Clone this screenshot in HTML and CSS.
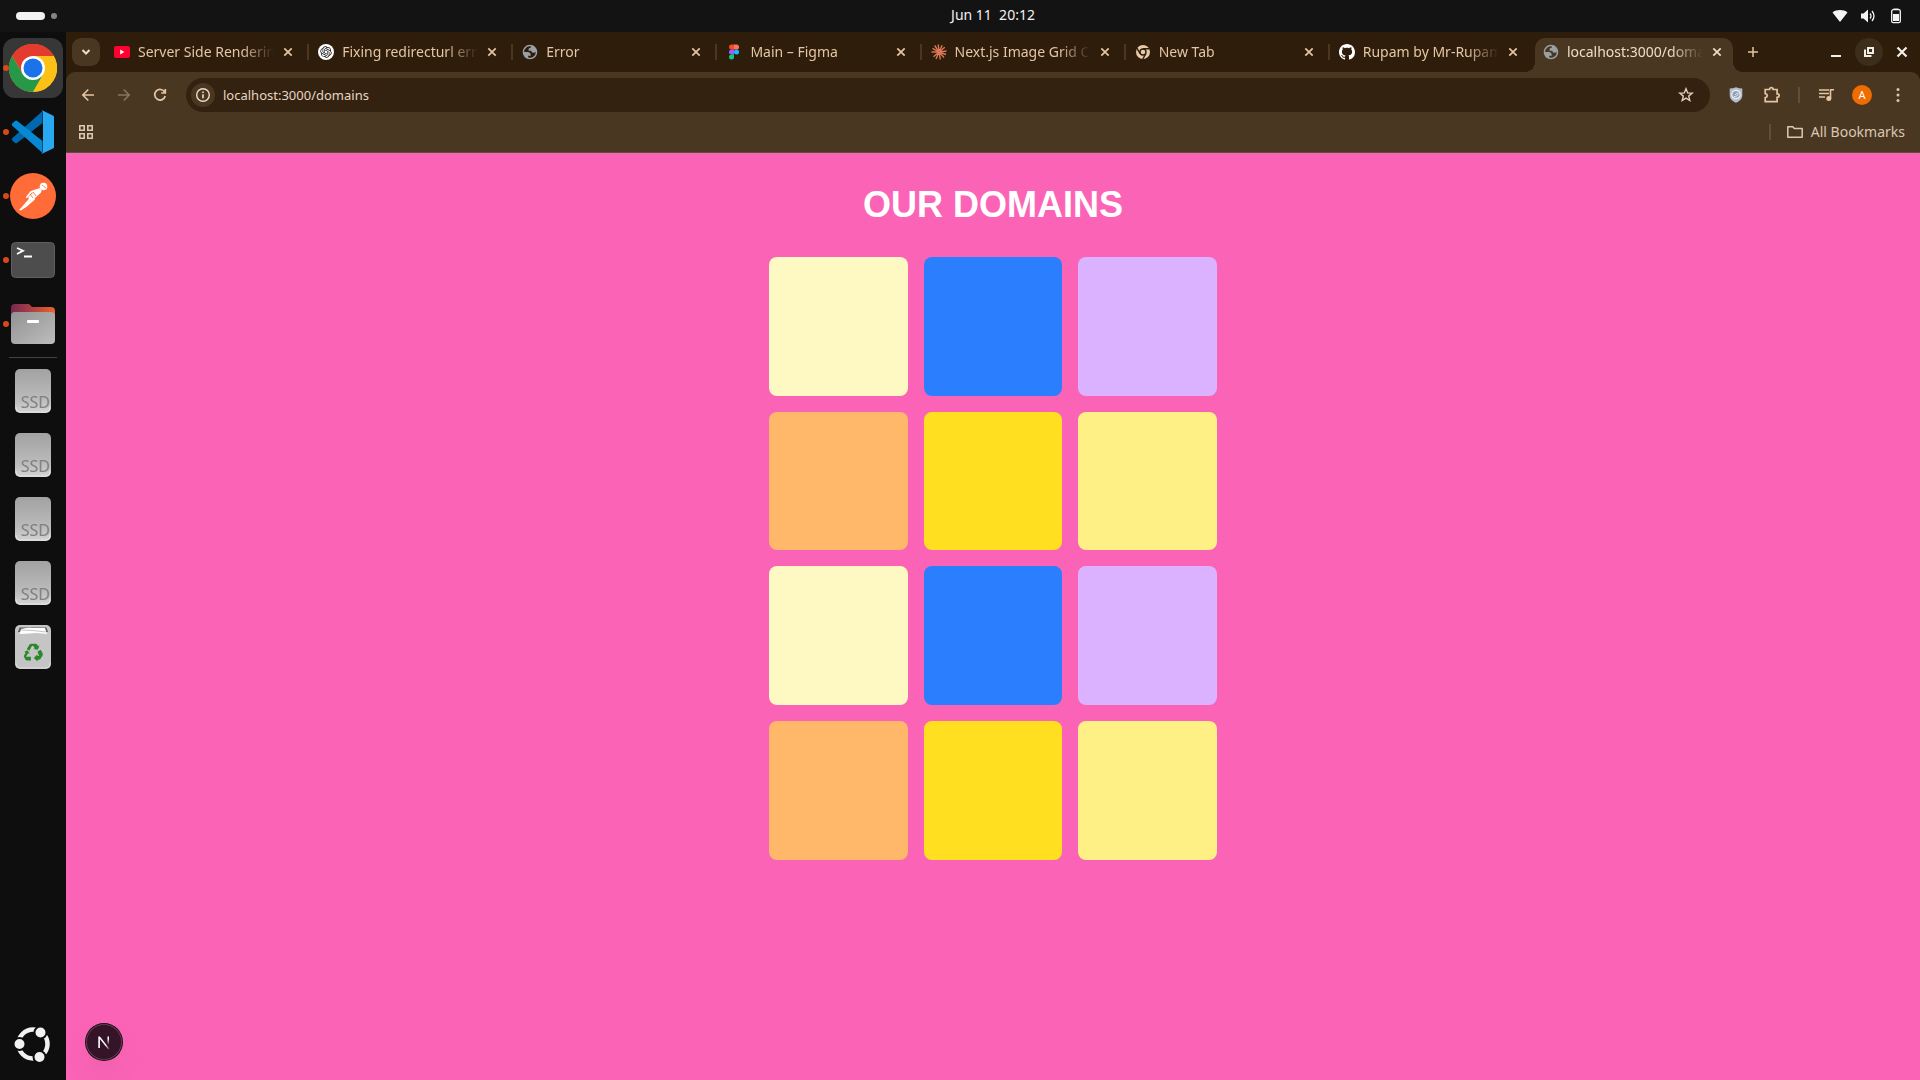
FILE: index.html
```html
<!DOCTYPE html>
<html lang="en">
<head>
<meta charset="utf-8">
<meta name="viewport" content="width=device-width, initial-scale=1">
<title>Our Domains</title>
<link rel="stylesheet" href="styles.css">
</head>
<body>
<svg class="defs" aria-hidden="true">
  <symbol id="close" viewBox="0 0 16 16"><path d="M4.300 4.300l7.400 7.400M11.700 4.300l-7.400 7.400" fill="none" stroke="currentColor" stroke-width="1.700"/></symbol>
  <symbol id="globe" viewBox="1 1 22 22"><path fill="#9aa0a6" fill-rule="evenodd" d="M12 2C6.480 2 2 6.480 2 12s4.480 10 10 10 10-4.480 10-10S17.520 2 12 2zM4 12h4.400c3.407.022 4.922 1.730 4.543 5.127H9.488v2.470a8.004 8.004 0 0 0 10.498-8.083C19.327 12.504 18.332 13 17 13c-2.137 0-3.206-.916-3.206-2.750h-3.748c-.274-2.728.683-4.092 2.870-4.092 0-.975.327-1.597.811-1.970A8.004 8.004 0 0 0 4 12z"/></symbol>
  <linearGradient id="drive-fill" x1="0" y1="0" x2="0" y2="1"><stop offset="0" stop-color="#a2a2a2"/><stop offset=".7" stop-color="#bcbcbc"/><stop offset="1" stop-color="#d4d4d4"/></linearGradient>
  <symbol id="drive" viewBox="0 0 48 48"><rect x="6" y="2" width="36" height="44" rx="5" fill="url(#drive-fill)"/><path d="M7 40v1a4 4 0 0 0 4 4h26a4 4 0 0 0 4-4v-1" fill="none" stroke="#e4e4e4"/></symbol>
</svg>

<header class="topbar">
  <button class="workspaces" aria-label="Activities"><span class="pill"></span><span class="dot"></span></button>
  <time class="clock">Jun 11&nbsp; 20:12</time>
  <div class="status">
    <svg width="16" height="16" viewBox="0 0 16 16"><path d="M.5 4.500C4.500 1.300 11.500 1.300 15.500 4.500L8 14z" fill="#f4f4f4"/></svg>
    <svg width="16" height="16" viewBox="0 0 16 16"><path d="M1 5.500h2.500L8 1.500v13l-4.500-4H1z" fill="#f4f4f4"/><path d="M10 5.500q2 2.500 0 5M12 3q4 5 0 10" fill="none" stroke="#f4f4f4" stroke-width="1.300"/></svg>
    <svg width="16" height="16" viewBox="0 0 16 16"><path d="M5.500 2V.5h5V2" fill="#f4f4f4"/><rect x="3.700" y="1.700" width="8.600" height="13" rx="1.500" fill="none" stroke="#f4f4f4" stroke-width="1.300"/><path d="M5 6h6v7H5z" fill="#f4f4f4"/></svg>
  </div>
</header>

<div class="desktop">
  <nav class="dock" aria-label="Applications">
    <button class="app running focused" aria-label="Chrome">
      <svg viewBox="0 0 48 48"><circle cx="24" cy="24" r="24" fill="#fbc116"/><path d="M24 24 3.200 12A24 24 0 0 1 44.800 12H24z" fill="#e33b2e"/><path d="M24 12h20.800A24 24 0 0 0 3.200 12L13.600 30 24 24z" fill="#e33b2e"/><path d="M3.200 12A24 24 0 0 0 24 48L34.400 30 24 24 13.600 30z" fill="#279847"/><path d="M34.400 30 24 48A24 24 0 0 0 44.800 12H24l6 8z" fill="#fbc116"/><circle cx="24" cy="24" r="12" fill="#fff"/><circle cx="24" cy="24" r="9.500" fill="#1a73e8"/></svg>
    </button>
    <button class="app running" aria-label="Visual Studio Code">
      <svg viewBox="0 0 48 48"><path d="M3 30.500 33.500 3v12L8 35q-1 .7-2 0l-2.700-2.400q-1-1 -.3-2.100z" fill="#0068ae"/><path d="M3.300 15.500 6 13q1-.8 2-.2L33.500 33v12L3 17.500q-.7-1 .3-2z" fill="#0788d2"/><path d="M32.500 2.800q.7-.4 1.500 0L44 7.500q1 .5 1 1.600v29.800q0 1.100-1 1.600L34 45.200q-.8.400-1.500 0 1.500-.2 1.500-2.200V5q0-2-1.500-2.200z" fill="#29a8f2"/></svg>
    </button>
    <button class="app running" aria-label="Postman">
      <svg viewBox="0 0 48 48"><circle cx="24" cy="24" r="23" fill="#ff6c37"/><g stroke="#fff" stroke-linecap="round" fill="none"><circle cx="34.500" cy="14.500" r="3.800" fill="#fff" stroke="none"/><path d="M30 19 22 26" stroke-width="5"/><path d="M22 26 12.500 37M25 27 17 34l-5.500 3.500M28 18l-6 2-4 5" stroke-width="2"/></g><path d="m21 22 3 4m0-6 3 4m6-11 4 3" stroke="#ff6c37" stroke-width=".8"/></svg>
    </button>
    <button class="app running" aria-label="Terminal">
      <svg viewBox="0 0 48 48"><rect x="2.500" y="6.500" width="43" height="35" rx="4" fill="#4d4d4d" stroke="#606060"/><path d="m8 12 6 2.800L8 18M15 20.500h8" fill="none" stroke="#fff" stroke-width="1.800"/></svg>
    </button>
    <button class="app running" aria-label="Files">
      <svg viewBox="0 0 48 48"><linearGradient id="tab-fill"><stop offset="0" stop-color="#77294f"/><stop offset=".4" stop-color="#a63c46"/><stop offset="1" stop-color="#f1622b"/></linearGradient><linearGradient id="box-fill" x1="0" y1="0" x2="1" y2="1"><stop offset="0" stop-color="#929292"/><stop offset="1" stop-color="#bdbdbd"/></linearGradient><path d="M2 20V8q0-4 4-4h14l3 3h19q4 0 4 4v10z" fill="url(#tab-fill)"/><rect x="2" y="12" width="44" height="32" rx="4" fill="url(#box-fill)"/><rect x="18" y="20" width="12" height="3" rx="1" fill="#fff"/></svg>
    </button>
    <hr>
    <button class="app drive" aria-label="Drive 1"><svg><use href="#drive"/></svg><span>SSD</span></button>
    <button class="app drive" aria-label="Drive 2"><svg><use href="#drive"/></svg><span>SSD</span></button>
    <button class="app drive" aria-label="Drive 3"><svg><use href="#drive"/></svg><span>SSD</span></button>
    <button class="app drive" aria-label="Drive 4"><svg><use href="#drive"/></svg><span>SSD</span></button>
    <button class="app" aria-label="Trash">
      <svg viewBox="0 0 48 48"><rect x="6" y="2" width="36" height="44" rx="5" fill="#c5c5c5"/><path d="M7 40v1a4 4 0 0 0 4 4h26a4 4 0 0 0 4-4v-1" fill="none" stroke="#dcdcdc"/><path d="m9 9 1.500-4.500h27L39 9z" fill="#5c5c5c"/><path d="M10.500 11 12 6q8-2 12-1l12 0 2 6-10-1-8 .5z" fill="#fff"/><path d="m12 7 12 .5L37 9" stroke="#aaa" stroke-width=".7" fill="none"/><g fill="#27892b" transform="translate(4.700 5.500) scale(.82)"><path d="m19 27-3-2 3-5q1-1.500 2.500-1.500h5q1.500 0 2.300 1.300l1 1.700 1.700-1-2 5.500-5.500-1 1.700-1-2-3-1.500.2z"/><path d="M17 26.500 19.500 31l-2-.8-2.500 4.300h6V39h-4.500q-1.500 0-2.300-1.300L12.800 35q-.7-1.200 0-2.500l1.700-3-1.500-1z"/><path d="m29 28 4-2 2.200 4.300q.7 1.200 0 2.500L33 36.700q-.7 1.300-2 1.300h-2v2.200L24.500 36l4.500-4.500v2h2z"/></g></svg>
    </button>
    <button class="app show-apps" aria-label="Show apps">
      <svg viewBox="0 0 48 48"><circle cx="24" cy="24" r="14.500" fill="none" stroke="#f2f2f2" stroke-width="4.500"/><g fill="#f2f2f2" stroke="#0e0e0e" stroke-width="2"><circle cx="10.500" cy="24" r="6"/><circle cx="31.500" cy="12.500" r="6"/><circle cx="30.500" cy="37" r="6"/></g></svg>
    </button>
  </nav>

  <div class="browser">
    <div class="tabstrip">
      <button class="tab-search" aria-label="Search tabs"><svg width="16" height="16" viewBox="0 0 16 16"><path d="m4.500 6 3.500 3.500L11.500 6" fill="none" stroke="currentColor" stroke-width="2"/></svg></button>
      <div class="tabs">
        <div class="tab"><svg viewBox="0 0 16 16"><rect y="2" width="16" height="12" rx="2" fill="#ff0033"/><path d="m6.200 5.500 4.200 2.500-4.200 2.500z" fill="#fff"/></svg><a href="#" class="title">Server Side Rendering</a><button class="x" aria-label="Close tab"><svg><use href="#close"/></svg></button></div>
        <div class="tab"><svg viewBox="0 0 16 16"><circle cx="8" cy="8" r="8" fill="#fff"/><path transform="translate(2.300 2.300) scale(.475)" fill="#111" d="M22.282 9.821a5.985 5.985 0 0 0-.516-4.911 6.046 6.046 0 0 0-6.510-2.900A6.065 6.065 0 0 0 4.981 4.182a5.985 5.985 0 0 0-3.998 2.900 6.046 6.046 0 0 0 .743 7.097 5.980 5.980 0 0 0 .511 4.911 6.051 6.051 0 0 0 6.515 2.900A5.985 5.985 0 0 0 13.260 24a6.056 6.056 0 0 0 5.772-4.206 5.989 5.989 0 0 0 3.998-2.900 6.056 6.056 0 0 0-.748-7.073zm-9.022 12.608a4.476 4.476 0 0 1-2.876-1.041l.142-.080 4.778-2.758a.795.795 0 0 0 .393-.681v-6.737l2.020 1.169a.071.071 0 0 1 .038.052v5.583a4.504 4.504 0 0 1-4.495 4.494zm-9.661-4.125a4.471 4.471 0 0 1-.535-3.014l.142.085 4.783 2.758a.771.771 0 0 0 .781 0l5.843-3.369v2.332a.080.080 0 0 1-.033.062L9.740 19.950a4.499 4.499 0 0 1-6.141-1.646zM2.341 7.896a4.485 4.485 0 0 1 2.366-1.973V11.600a.766.766 0 0 0 .388.677l5.814 3.354-2.020 1.169a.076.076 0 0 1-.071 0l-4.830-2.787A4.504 4.504 0 0 1 2.341 7.872zm16.596 3.856L13.104 8.364 15.119 7.200a.076.076 0 0 1 .071 0l4.830 2.791a4.494 4.494 0 0 1-.677 8.104v-5.677a.790.790 0 0 0-.407-.667zm2.011-3.023l-.142-.085-4.774-2.782a.776.776 0 0 0-.785 0L9.409 9.230V6.897a.066.066 0 0 1 .028-.062l4.830-2.787a4.499 4.499 0 0 1 6.680 4.660zM8.307 12.863l-2.020-1.164a.080.080 0 0 1-.038-.057V6.074a4.499 4.499 0 0 1 7.376-3.454l-.142.081L8.704 5.459a.795.795 0 0 0-.393.681zm1.098-2.365l2.602-1.500 2.607 1.500v2.999l-2.597 1.500-2.607-1.500Z"/></svg><a href="#" class="title">Fixing redirecturl error</a><button class="x" aria-label="Close tab"><svg><use href="#close"/></svg></button></div>
        <div class="tab"><svg><use href="#globe"/></svg><a href="#" class="title">Error</a><button class="x" aria-label="Close tab"><svg><use href="#close"/></svg></button></div>
        <div class="tab"><svg viewBox="0 0 16 16"><path d="M8 .5H5.500a2.500 2.500 0 0 0 0 5H8z" fill="#f24e1e"/><path d="M8 .5h2.500a2.500 2.500 0 0 1 0 5H8z" fill="#ff7262"/><path d="M8 5.500H5.500a2.500 2.500 0 0 0 0 5H8z" fill="#a259ff"/><circle cx="10.500" cy="8" r="2.500" fill="#1abcfe"/><path d="M8 10.500H5.500A2.500 2.500 0 1 0 8 13z" fill="#0acf83"/></svg><a href="#" class="title">Main – Figma</a><button class="x" aria-label="Close tab"><svg><use href="#close"/></svg></button></div>
        <div class="tab"><svg viewBox="0 0 16 16"><path d="M8 8 7.300.5M8 8l3.200-6.800M8 8l5.800-4.800M8 8l7.500-1M8 8l7 2.500M8 8l5 5.500M8 8l1.300 7.500M8 8l-3 7M8 8l-5.500 4.800M8 8H.5M8 8 1.500 4.300M8 8 3.700 1.500" stroke="#d97757" stroke-width="1.400"/></svg><a href="#" class="title">Next.js Image Grid C</a><button class="x" aria-label="Close tab"><svg><use href="#close"/></svg></button></div>
        <div class="tab"><svg viewBox="0 0 16 16"><circle cx="8" cy="8" r="7" fill="#e8caa9"/><circle cx="8" cy="8" r="3" fill="none" stroke="#2e1d0b" stroke-width="1.400"/><path d="M8 4.700h6.500M5.100 9.700 1.900 4.100M10.900 9.700 7.800 15" stroke="#2e1d0b" stroke-width="1.400"/></svg><a href="#" class="title">New Tab</a><button class="x" aria-label="Close tab"><svg><use href="#close"/></svg></button></div>
        <div class="tab"><svg viewBox="0 0 16 16"><path fill="#fff" d="M8 0C3.580 0 0 3.580 0 8c0 3.540 2.290 6.530 5.470 7.590.4.070.55-.17.55-.38 0-.19-.01-.82-.01-1.490-2.010.37-2.530-.49-2.690-.94-.09-.23-.48-.94-.82-1.130-.28-.15-.68-.52-.01-.53.63-.01 1.080.58 1.230.82.72 1.210 1.870.87 2.330.66.07-.52.28-.87.51-1.070-1.780-.2-3.640-.89-3.640-3.950 0-.87.31-1.590.82-2.150-.08-.2-.36-1.020.08-2.120 0 0 .67-.21 2.200.82.64-.18 1.320-.27 2-.27s1.360.09 2 .27c1.530-1.040 2.200-.82 2.200-.82.44 1.100.16 1.920.08 2.120.51.56.82 1.270.82 2.150 0 3.070-1.870 3.750-3.650 3.950.29.25.54.73.54 1.480 0 1.070-.01 1.930-.01 2.200 0 .21.15.46.55.38A8.010 8.010 0 0 0 16 8c0-4.420-3.580-8-8-8z"/></svg><a href="#" class="title">Rupam by Mr-Rupam</a><button class="x" aria-label="Close tab"><svg><use href="#close"/></svg></button></div>
        <div class="tab active"><svg><use href="#globe"/></svg><a href="#" class="title">localhost:3000/domains</a><button class="x" aria-label="Close tab"><svg><use href="#close"/></svg></button></div>
      </div>
      <button class="new-tab" aria-label="New tab"><svg width="16" height="16" viewBox="0 0 16 16"><path d="M8 3v10M3 8h10" stroke="currentColor" stroke-width="1.500"/></svg></button>
      <div class="window-controls">
        <button aria-label="Minimize"><svg width="16" height="16" viewBox="0 0 16 16"><path d="M3 12h10" stroke="currentColor" stroke-width="2"/></svg></button>
        <button class="restore" aria-label="Restore"><svg width="16" height="16" viewBox="0 0 16 16"><path d="M7 4h5v5H7zM4 5.500V12h6.500" fill="none" stroke="currentColor" stroke-width="2"/></svg></button>
        <button aria-label="Close"><svg width="16" height="16" viewBox="0 0 16 16"><path d="m3.500 3.500 9 9m0-9-9 9" stroke="currentColor" stroke-width="2.200"/></svg></button>
      </div>
    </div>

    <div class="chrome">
      <div class="toolbar">
        <div class="navigation">
          <button aria-label="Back"><svg width="16" height="16" viewBox="0 0 16 16"><path d="M14 8H3m5.300-5.500L2.800 8l5.500 5.500" fill="none" stroke="currentColor" stroke-width="1.600"/></svg></button>
          <button aria-label="Forward" disabled><svg width="16" height="16" viewBox="0 0 16 16"><path d="M2 8h11M7.700 2.500 13.200 8l-5.500 5.500" fill="none" stroke="currentColor" stroke-width="1.600"/></svg></button>
          <button aria-label="Reload"><svg width="16" height="16" viewBox="0 0 16 16"><path d="M12.700 5.200A5.300 5.300 0 1 0 13.200 9M13.300 2v4H9.200" fill="none" stroke="currentColor" stroke-width="1.700"/></svg></button>
        </div>
        <div class="omnibox">
          <button class="site-info" aria-label="Site information"><svg width="16" height="16" viewBox="0 0 16 16"><circle cx="8" cy="8" r="6.300" fill="none" stroke="currentColor" stroke-width="1.400"/><path d="M8 7.300v4M8 4.500V6" stroke="currentColor" stroke-width="1.600"/></svg></button>
          <input type="text" aria-label="Address" value="localhost:3000/domains">
          <button class="bookmark" aria-label="Bookmark this page"><svg width="16" height="16" viewBox="0 0 16 16"><path d="m8 1.700 1.700 4.200 4.500.3-3.500 2.900 1.100 4.400L8 11.100l-3.800 2.400 1.100-4.400L1.800 6.200l4.500-.3z" fill="none" stroke="currentColor" stroke-width="1.400"/></svg></button>
        </div>
        <div class="actions">
          <button aria-label="Shield extension"><svg width="16" height="16" viewBox="0 0 16 16"><path d="M8 .2q3 1.400 6.300 1.400V8c0 4-3 6.500-6.300 7.800C4.700 14.500 1.700 12 1.700 8V1.600Q5 1.600 8 .2z" fill="#b4bdce"/><circle cx="8" cy="7.500" r="4.200" fill="#94a0b4" stroke="#eef1f7" stroke-width="1.200"/><path d="M6 9.500q4 .5 4-3.500-2 .5-3 2" fill="none" stroke="#e0e5ef"/></svg></button>
          <button aria-label="Extensions"><svg width="18" height="18" viewBox="0 0 18 18"><path d="M2.200 3.500h4.300c0-2.600 3.600-2.600 3.600 0h4v4.300c2.800 0 2.800 3.600 0 3.600v4.300H2.200v-4c2.800-.6 2.800-3.500 0-4.100z" fill="none" stroke="currentColor" stroke-width="1.700"/></svg></button>
          <span class="divider"></span>
          <button aria-label="Media"><svg width="18" height="18" viewBox="0 0 18 18"><path d="M2 4h10M2 7.500h10M2 11h6M13.500 3v9.500M13 3.800h4" fill="none" stroke="currentColor" stroke-width="1.600"/><circle cx="11.800" cy="12.500" r="2.500" fill="currentColor"/></svg></button>
          <button class="avatar" aria-label="Profile">A</button>
          <button aria-label="Menu"><svg width="16" height="16" viewBox="0 0 16 16"><g fill="currentColor"><circle cx="8" cy="2.500" r="1.500"/><circle cx="8" cy="8" r="1.500"/><circle cx="8" cy="13.500" r="1.500"/></g></svg></button>
        </div>
      </div>
      <div class="bookmarks">
        <button aria-label="Apps"><svg width="16" height="16" viewBox="0 0 16 16"><path d="M1.800 1.800h4.400v4.400H1.800zM9.800 1.800h4.400v4.400H9.800zM1.800 9.800h4.400v4.400H1.800zM9.800 9.800h4.400v4.400H9.800z" fill="none" stroke="currentColor" stroke-width="1.600"/></svg></button>
        <span class="divider"></span>
        <button class="all"><svg width="16" height="16" viewBox="0 0 16 16"><path d="M.8 13.200V2.800h5l1.500 1.700h7.900v8.700z" fill="none" stroke="currentColor" stroke-width="1.500" stroke-linejoin="round"/></svg>All Bookmarks</button>
      </div>
    </div>

    <main class="page">
      <h1>OUR DOMAINS</h1>
      <div class="grid">
        <div class="card cream"></div><div class="card blue"></div><div class="card purple"></div>
        <div class="card orange"></div><div class="card gold"></div><div class="card yellow"></div>
        <div class="card cream"></div><div class="card blue"></div><div class="card purple"></div>
        <div class="card orange"></div><div class="card gold"></div><div class="card yellow"></div>
      </div>
      <button class="dev-badge" aria-label="Next.js dev tools"><svg width="16" height="16" viewBox="0 0 16 16"><defs><linearGradient id="fade-a" x1="0" y1="0" x2="0" y2="1"><stop offset=".3" stop-color="#fff"/><stop offset="1" stop-color="#fff" stop-opacity="0"/></linearGradient><linearGradient id="fade-b" x1="0" y1="0" x2="1" y2="1"><stop offset=".65" stop-color="#fff"/><stop offset="1" stop-color="#fff" stop-opacity=".1"/></linearGradient></defs><path d="M2.300 14V2.500h1.600l9.600 12.200-1.200.8L3.900 5v9z" fill="url(#fade-b)"/><path d="M11.500 2.500H13V11l-1.500-2z" fill="url(#fade-a)"/></svg></button>
    </main>
  </div>
</div>
</body>
</html>
```
FILE: styles.css
```css
* { box-sizing: border-box; }

body {
  margin: 0;
  min-height: 100vh;
  display: flex;
  flex-direction: column;
  background: #0e0e0e;
  color: #e4c5a4;
  font: 14px/20px "Noto Sans", "Open Sans", sans-serif;
}

button {
  display: flex;
  align-items: center;
  justify-content: center;
  flex: none;
  padding: 0;
  border: 0;
  background: none;
  color: inherit;
  font: inherit;
}

svg { display: block; flex: none; }
.defs { position: absolute; width: 0; height: 0; }

/* System bar */
.topbar {
  display: grid;
  grid-template-columns: 1fr auto 1fr;
  align-items: center;
  height: 32px;
  padding: 0 16px;
  background: #131313;
  color: #f2f2f2;
}
/* the clock is centred over the browser window, beside the dock */
.clock { margin-left: 66px; line-height: 16px; padding-bottom: 2px; }
.workspaces { justify-self: start; gap: 6px; }
.pill { width: 29px; height: 8px; border-radius: 4px; background: #f2f2f2; }
.dot { width: 6px; height: 6px; border-radius: 3px; background: #858585; }
.status { justify-self: end; display: flex; gap: 12px; }

.desktop { flex: 1; display: flex; }

/* Dock */
.dock {
  flex: none;
  display: flex;
  flex-direction: column;
  align-items: center;
  width: 66px;
  padding: 4px 0;
  background: #0e0e0e;
}
.app { position: relative; width: 66px; height: 64px; }
.app svg { position: relative; width: 48px; height: 48px; }
.running::before {
  content: "";
  position: absolute;
  z-index: 1;
  left: 3px;
  top: 29px;
  width: 6px;
  height: 6px;
  border-radius: 3px;
  background: #d64a17;
}
.focused::after {
  content: "";
  position: absolute;
  inset: 2px 3px;
  border-radius: 12px;
  background: #373737;
}
.focused svg { z-index: 1; }
.dock hr { width: 48px; height: 1px; margin: 1px 0; border: 0; background: #444; }
.drive span {
  position: absolute;
  right: 16px;
  bottom: 11px;
  color: #808080;
  font-size: 16px;
  line-height: 20px;
}
.show-apps { margin-top: auto; }

/* Browser window */
.browser { flex: 1; min-width: 0; display: flex; flex-direction: column; }

.tabstrip {
  display: flex;
  align-items: center;
  height: 40px;
  padding: 0 4px 0 6px;
  background: #2e1d0b;
}
.tab-search { width: 28px; height: 28px; border-radius: 9px; background: #4a3721; color: #f2dcc4; }
.tabs {
  flex: 0 1 1627px;
  min-width: 0;
  align-self: stretch;
  display: flex;
  gap: 6px;
  margin-left: 6px;
}
.tab {
  position: relative;
  flex: 1;
  min-width: 0;
  display: flex;
  align-items: center;
  padding: 0 8px;
}
.tab > svg { width: 16px; height: 16px; }
.title {
  flex: 1;
  margin: 0 6px 0 8px;
  overflow: hidden;
  white-space: nowrap;
  color: inherit;
  text-decoration: none;
  -webkit-mask-image: linear-gradient(to left, transparent, #000 32px);
  mask-image: linear-gradient(to left, transparent, #000 32px);
}
.x { width: 16px; height: 16px; }
.x svg { width: 16px; height: 16px; }
.tab::after {
  content: "";
  position: absolute;
  right: -5px;
  top: 12px;
  width: 2px;
  height: 16px;
  background: #4a3721;
}
.tab:nth-last-child(2)::after { display: none; }
.tab.active { margin-top: 6px; padding-bottom: 6px; border-radius: 10px 10px 0 0; background: #4a3721; color: #f0dcc6; }
.tab.active::before,
.tab.active::after {
  content: "";
  position: absolute;
  top: auto;
  bottom: 0;
  width: 10px;
  height: 10px;
}
.tab.active::before { left: -10px; background: radial-gradient(circle at 0 0, transparent 10px, #4a3721 10px); }
.tab.active::after { right: -10px; background: radial-gradient(circle at 100% 0, transparent 10px, #4a3721 10px); }
.new-tab { width: 28px; height: 28px; margin-left: 6px; }
.window-controls { display: flex; gap: 5px; margin-left: auto; color: #f4eee8; }
.window-controls button { width: 28px; height: 28px; border-radius: 14px; }
.window-controls .restore { background: #3d2d1b; }

.chrome { background: linear-gradient(#2e1d0b 10px, #4a3721 10px); border-bottom: 1px solid #5a5042; }
.toolbar {
  display: flex;
  align-items: center;
  padding: 6px 8px;
  border-radius: 9px 9px 0 0;
  background: #4a3721;
}
.navigation { display: flex; gap: 8px; }
.navigation button, .actions button { width: 28px; height: 28px; }
.navigation button:disabled { color: #8b7459; }
.omnibox {
  flex: 1;
  display: flex;
  align-items: center;
  height: 34px;
  margin-left: 12px;
  padding: 0 16px 0 5px;
  border-radius: 17px;
  background: #33220f;
}
.site-info { width: 24px; height: 24px; border-radius: 12px; background: #4a3721; color: #f0dcc6; }
.omnibox input {
  flex: 1;
  min-width: 0;
  margin: 0 8px;
  padding: 0;
  border: 0;
  outline: 0;
  background: none;
  color: #e6d6c3;
  font: inherit;
  font-size: 13px;
}
.bookmark { color: #e2d0bb; }
.actions { display: flex; align-items: center; gap: 8px; margin-left: 12px; }
.divider { flex: none; width: 2px; height: 16px; background: #674e33; }
.actions .divider { margin: 0 4px; }
.actions .avatar { width: 20px; height: 20px; margin: 0 4px; border-radius: 10px; background: #ef6c00; color: #fff; font-size: 11px; }

.bookmarks { display: flex; align-items: center; gap: 16px; padding: 4px 15px 10px 12px; height: 34px; color: #d9c8b4; }
.bookmarks .divider { margin-left: auto; }
.bookmarks .all { gap: 8px; }

/* Page */
.page {
  flex: 1;
  padding: 32px;
  background: #fb64b6;
  color: #fff;
  font-family: "Liberation Sans", Arial, sans-serif;
}
.page h1 { margin: 0 0 32px; text-align: center; font-size: 36px; line-height: 40px; }
.grid { display: grid; grid-template-columns: repeat(3, 1fr); gap: 16px; max-width: 448px; margin: 0 auto; }
.card { aspect-ratio: 1; border-radius: 8px; }
.cream { background: #fef9c2; }
.blue { background: #2b7fff; }
.purple { background: #dab2ff; }
.orange { background: #ffb86a; }
.gold { background: #ffdf20; }
.yellow { background: #fff085; }

.dev-badge {
  position: fixed;
  left: 86px;
  bottom: 20px;
  width: 36px;
  height: 36px;
  border-radius: 18px;
  background: #351427;
  box-shadow: 0 0 0 1px #1c0d16, inset 0 0 0 1px #5b3e50, 0 16px 32px -8px rgba(0, 0, 0, .16);
}
```
